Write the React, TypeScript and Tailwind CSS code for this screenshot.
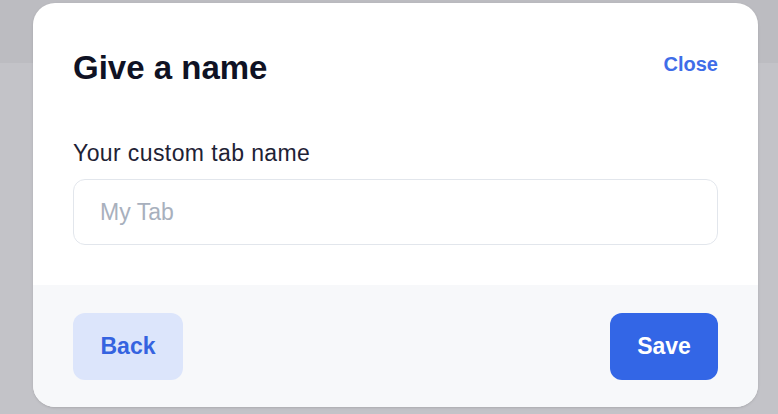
export default function App() {
  return (
    <div className="relative h-[414px] w-[778px] overflow-hidden bg-[#c3c3c8] font-['Liberation_Sans',Arial,sans-serif]">
      <div className="h-[63px] w-full bg-[#bcbcc1]" />
      <div className="absolute left-[33px] top-[3px] flex h-[404px] w-[725px] flex-col overflow-hidden rounded-[22px] bg-white shadow-sm">
        <div className="flex flex-1 flex-col px-10 pt-[46px]">
          <div className="flex items-start justify-between">
            <h2 className="text-[33px] font-bold leading-[38px] text-[#0f1224]">Give a name</h2>
            <button className="mt-[3px] text-[20px] font-bold leading-[24px] text-[#3f6de8]">Close</button>
          </div>
          <label className="mt-[52px] text-[23px] leading-[28px] tracking-[0.4px] text-[#1e2235]">Your custom tab name</label>
          <div className="mt-[12px] flex h-[66px] items-center rounded-[12px] border border-[#e2e6ec] px-[26px] text-[23px] text-[#a8b0bd]">
            My Tab
          </div>
        </div>
        <div className="flex h-[122px] items-center justify-between bg-[#f7f8fa] px-10">
          <button className="h-[67px] w-[110px] rounded-[12px] bg-[#dce5fb] text-[23px] font-bold text-[#3563e0]">Back</button>
          <button className="h-[67px] w-[108px] rounded-[12px] bg-[#3366e6] text-[23px] font-bold text-white">Save</button>
        </div>
      </div>
    </div>
  );
}
